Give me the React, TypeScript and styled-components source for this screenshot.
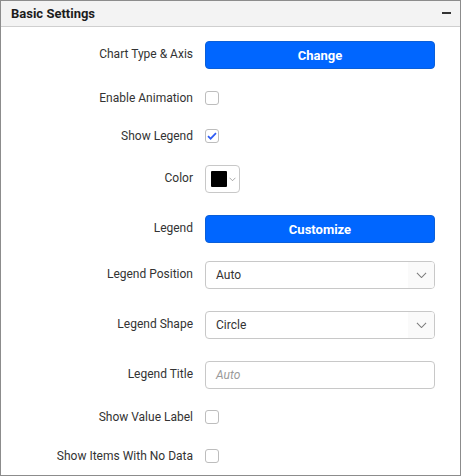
import React from "react";
import styled, { createGlobalStyle } from "styled-components";

const Global = createGlobalStyle`
  html, body { margin: 0; padding: 0; background: #fff; }
  body { font-family: Roboto, "Liberation Sans", sans-serif; }
  * { box-sizing: border-box; }
`;

const Panel = styled.div`
  width: 461px;
  height: 476px;
  border: 1px solid #8c8c8c;
  background: #fff;
  display: flex;
  flex-direction: column;
`;

const Header = styled.div`
  height: 26px;
  flex: none;
  background: #f3f3f3;
  border-bottom: 1px solid #cfcfcf;
  display: flex;
  align-items: center;
  justify-content: space-between;
  padding: 0 9px 0 10px;
`;

const Title = styled.span`
  font-weight: 700;
  font-size: 13px;
  color: #1c1c1c;
`;

const Minus = styled.span`
  width: 9px;
  height: 2px;
  background: #333;
  margin-bottom: 1px;
`;

const Body = styled.div`
  display: flex;
  flex-direction: column;
`;

const Row = styled.div<{ $top: number }>`
  display: grid;
  grid-template-columns: 192px 230px;
  column-gap: 12px;
  align-items: center;
  height: 28px;
  margin-top: ${(p) => p.$top}px;
`;

const Label = styled.label<{ $lift?: number }>`
  text-align: right;
  font-size: 12px;
  color: #333;
  white-space: nowrap;
  padding-bottom: ${(p) => p.$lift ?? 0}px;
`;

const PrimaryButton = styled.button`
  height: 28px;
  width: 100%;
  border: 1px solid #0a5fd9;
  border-radius: 4px;
  background: #0066ff;
  color: #fff;
  font-family: Roboto, "Liberation Sans", sans-serif;
  font-weight: 700;
  font-size: 13px;
  padding: 0;
`;

const Check = styled.span`
  width: 14px;
  height: 14px;
  border: 1px solid #bdbdbd;
  border-radius: 3px;
  background: #fff;
  display: flex;
  align-items: center;
  justify-content: center;
`;

const ColorPicker = styled.div`
  width: 35px;
  height: 28px;
  border: 1px solid #c8c8c8;
  border-radius: 4px;
  display: flex;
  align-items: center;
  padding-left: 5px;
  gap: 2px;
`;

const Swatch = styled.span`
  width: 16px;
  height: 16px;
  background: #000;
  border-radius: 1px;
`;

const Select = styled.div`
  height: 28px;
  border: 1px solid #c8c8c8;
  border-radius: 4px;
  display: flex;
  align-items: center;
  overflow: hidden;
`;

const SelectText = styled.span`
  flex: 1;
  padding-left: 10px;
  font-size: 12px;
  color: #333;
`;

const Arrow = styled.span`
  width: 26px;
  height: 100%;
  background: #fafafa;
  display: flex;
  align-items: center;
  justify-content: center;
`;

const TextInput = styled.div`
  height: 28px;
  border: 1px solid #c8c8c8;
  border-radius: 4px;
  display: flex;
  align-items: center;
  padding-left: 10px;
  font-size: 12px;
  font-style: italic;
  color: #9a9a9a;
`;

const Chevron = ({ w = 11 }: { w?: number }) => (
  <svg width={w} height={w / 2 + 1} viewBox="0 0 12 7" fill="none">
    <path d="M1 1l5 5 5-5" stroke="#7a7a7a" strokeWidth="1.1" />
  </svg>
);

const Checkbox = ({ checked }: { checked?: boolean }) => (
  <Check>
    {checked && (
      <svg width="10" height="8" viewBox="0 0 10 8" fill="none">
        <path d="M1 4.2l2.6 2.5L9 1.2" stroke="#2f5cf5" strokeWidth="1.7" />
      </svg>
    )}
  </Check>
);

export default function App() {
  return (
    <>
      <Global />
      <Panel>
        <Header>
          <Title>Basic Settings</Title>
          <Minus />
        </Header>
        <Body>
          <Row $top={14}>
            <Label $lift={3}>Chart Type &amp; Axis</Label>
            <PrimaryButton>Change</PrimaryButton>
          </Row>
          <Row $top={15}>
            <Label>Enable Animation</Label>
            <Checkbox />
          </Row>
          <Row $top={10}>
            <Label>Show Legend</Label>
            <Checkbox checked />
          </Row>
          <Row $top={15}>
            <Label $lift={3}>Color</Label>
            <ColorPicker>
              <Swatch />
              <Chevron w={7} />
            </ColorPicker>
          </Row>
          <Row $top={22}>
            <Label $lift={3}>Legend</Label>
            <PrimaryButton>Customize</PrimaryButton>
          </Row>
          <Row $top={18}>
            <Label $lift={3}>Legend Position</Label>
            <Select>
              <SelectText>Auto</SelectText>
              <Arrow>
                <Chevron />
              </Arrow>
            </Select>
          </Row>
          <Row $top={22}>
            <Label $lift={3}>Legend Shape</Label>
            <Select>
              <SelectText>Circle</SelectText>
              <Arrow>
                <Chevron />
              </Arrow>
            </Select>
          </Row>
          <Row $top={22}>
            <Label $lift={3}>Legend Title</Label>
            <TextInput>Auto</TextInput>
          </Row>
          <Row $top={14}>
            <Label>Show Value Label</Label>
            <Checkbox />
          </Row>
          <Row $top={11}>
            <Label>Show Items With No Data</Label>
            <Checkbox />
          </Row>
        </Body>
      </Panel>
    </>
  );
}
